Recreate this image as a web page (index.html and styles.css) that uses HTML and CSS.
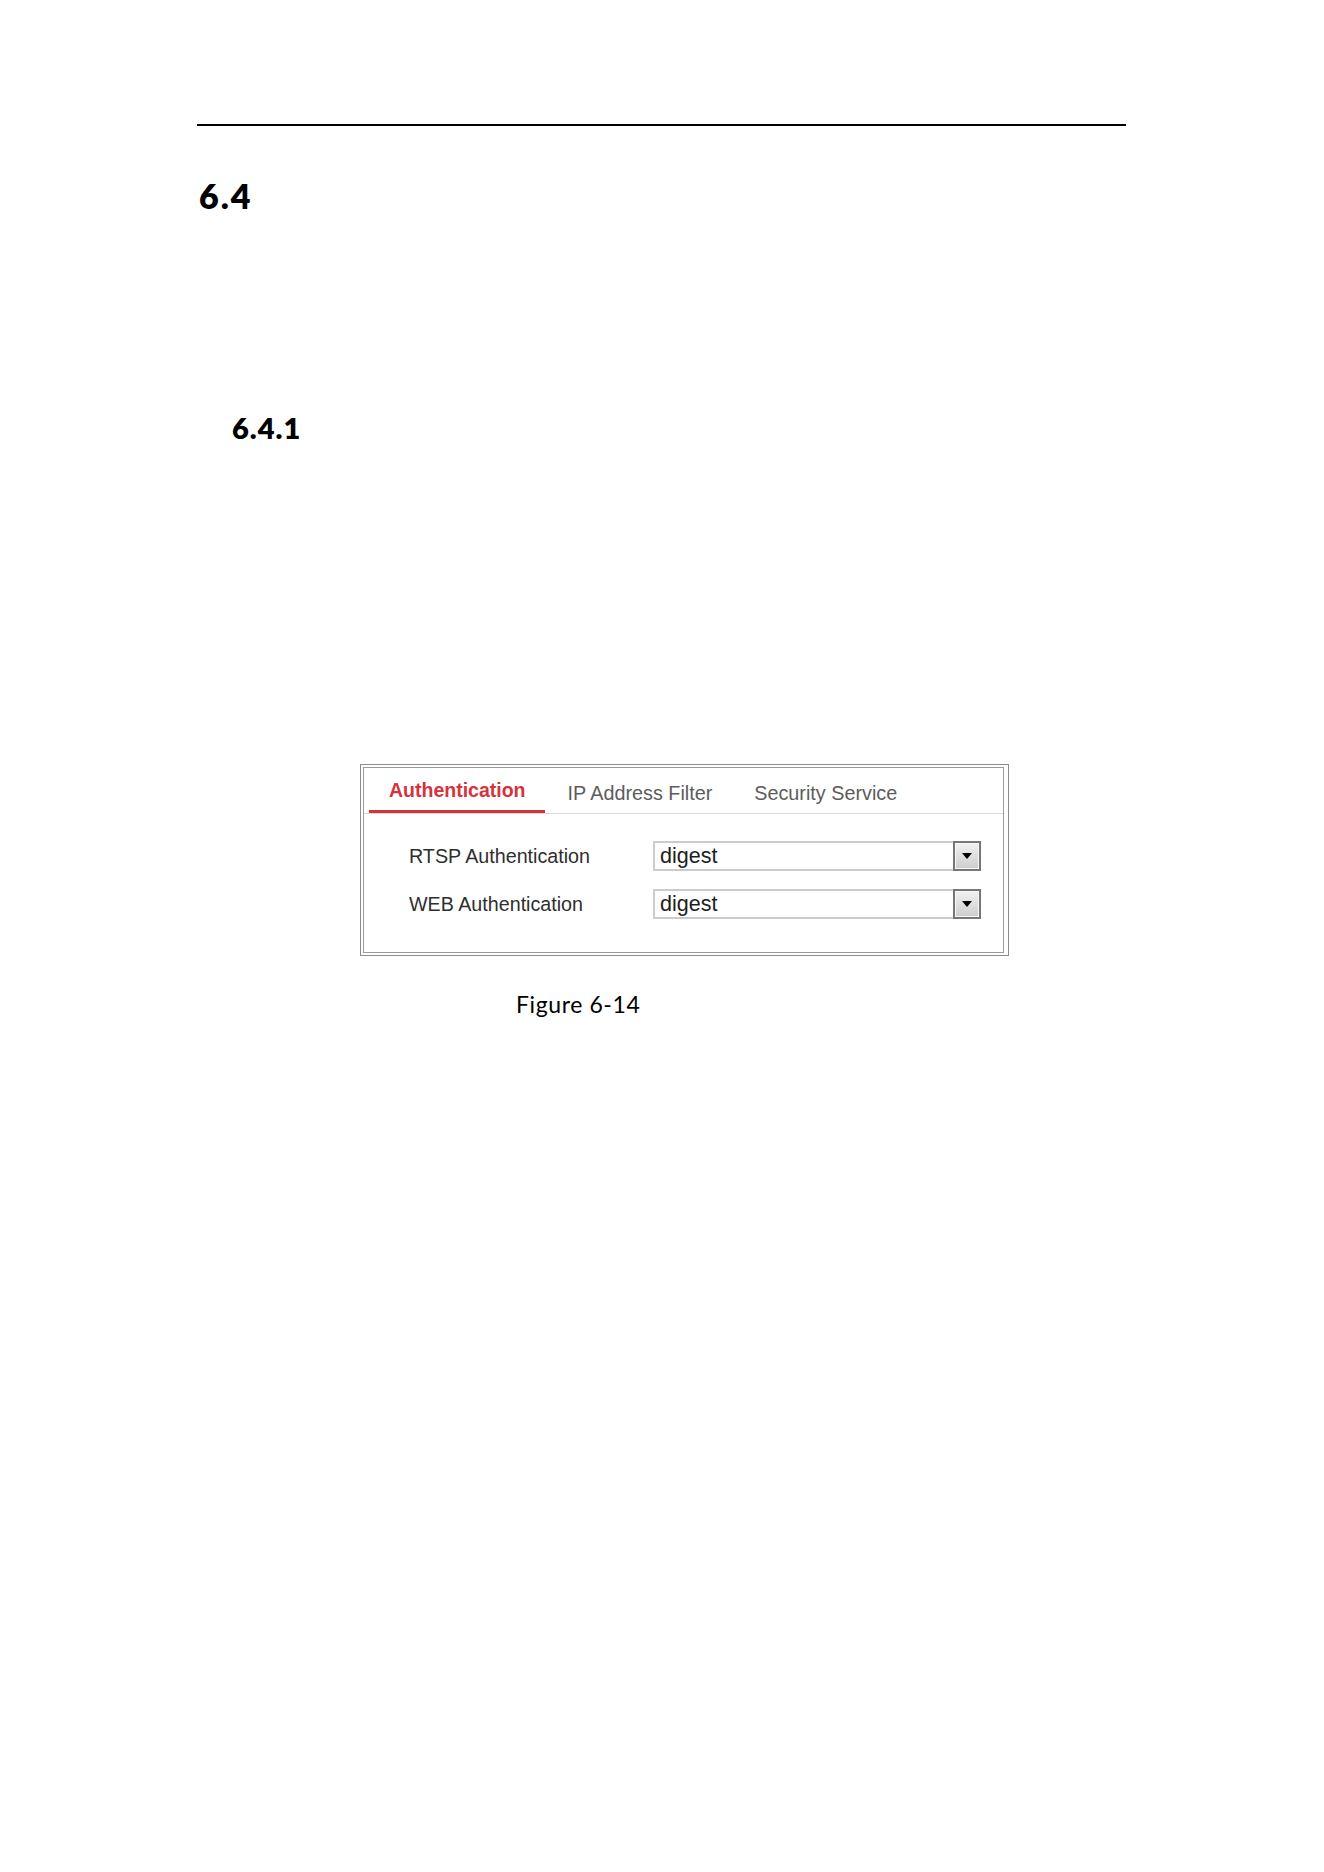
FILE: index.html
```html
<!DOCTYPE html>
<html lang="en">
<head>
  <meta charset="UTF-8">
  <title>6.4 Security</title>
  <link rel="stylesheet" href="styles.css">
</head>
<body>
  <div class="page">
    <div class="rule"></div>

    <h1 class="h-sec">6.4</h1>
    <h2 class="h-sub">6.4.1</h2>

    <div class="shot">
      <div class="shot-inner">
        <div class="tabs">
          <div class="tab active">Authentication</div>
          <div class="tab">IP Address Filter</div>
          <div class="tab">Security Service</div>
        </div>

        <div class="form">
          <div class="row">
            <div class="label">RTSP Authentication</div>
            <div class="select">
              <div class="select-value">digest</div>
              <div class="select-btn"><span class="arrow"></span></div>
            </div>
          </div>
          <div class="row">
            <div class="label">WEB Authentication</div>
            <div class="select">
              <div class="select-value">digest</div>
              <div class="select-btn"><span class="arrow"></span></div>
            </div>
          </div>
        </div>
      </div>
    </div>

    <p class="caption">Figure 6-14</p>
  </div>
</body>
</html>
```

FILE: styles.css
```css
body {
  margin: 0;
  background: #fff;
  font-family: "Liberation Sans", Arial, sans-serif;
}
.page {
  padding: 124px 0 0 197px;
  width: 929px;
}
.rule {
  height: 2px;
  background: #000;
}
.h-sec, .h-sub {
  font-family: Lato, "Open Sans", sans-serif;
  font-weight: 800;
  color: #000;
  margin: 0;
}
.h-sec {
  font-size: 34px;
  line-height: 40px;
  letter-spacing: 2px;
  margin: 50px 0 0 2px;
}
.h-sub {
  font-size: 29px;
  line-height: 36px;
  letter-spacing: 1px;
  margin: 194px 0 0 35px;
}

/* screenshot of the web ui */
.shot {
  margin: 318px 0 0 163px;
  width: 649px;
  box-sizing: border-box;
  border: 1px solid #8c8c8c;
  padding: 2px 4px 2px 2px;
}
.shot-inner {
  border: 1px solid #9a9a9a;
  height: 184px;
}
.tabs {
  display: flex;
  padding-left: 5px;
  border-bottom: 1px solid #d9d9d9;
}
.tab {
  box-sizing: border-box;
  height: 45px;
  padding: 14px 19px 0 23px;
  font-size: 19.8px;
  line-height: 22px;
  color: #5c5c5c;
}
.tab.active {
  padding: 11px 19px 0 20px;
  font-weight: bold;
  font-size: 19.5px;
  color: #d5333b;
  border-bottom: 3px solid #d5333b;
}
.form {
  padding: 27px 0 0 45px;
  display: flex;
  flex-direction: column;
  gap: 18px;
}
.row {
  display: flex;
  align-items: center;
  height: 30px;
}
.label {
  width: 244px;
  font-size: 19.7px;
  line-height: 30px;
  color: #2e2e2e;
}
.select {
  display: flex;
  width: 328px;
  height: 30px;
}
.select-value {
  flex: 1;
  box-sizing: border-box;
  border: 2px solid #cbcbcb;
  border-right: none;
  padding-left: 5px;
  font-size: 21.5px;
  line-height: 26px;
  color: #1e1e1e;
}
.select-btn {
  box-sizing: border-box;
  width: 28px;
  border: 2px solid #777;
  box-shadow: inset 0 0 0 1px #f6f6f6;
  background: linear-gradient(#f2f2f2, #cdcdcd);
  display: flex;
  align-items: center;
  justify-content: center;
}
.arrow {
  width: 0;
  height: 0;
  border-left: 5.5px solid transparent;
  border-right: 5.5px solid transparent;
  border-top: 6px solid #000;
}
.caption {
  font-family: Lato, "Open Sans", sans-serif;
  font-size: 23px;
  line-height: 28px;
  letter-spacing: 0.6px;
  color: #000;
  margin: 34px 0 0 319px;
}
```
